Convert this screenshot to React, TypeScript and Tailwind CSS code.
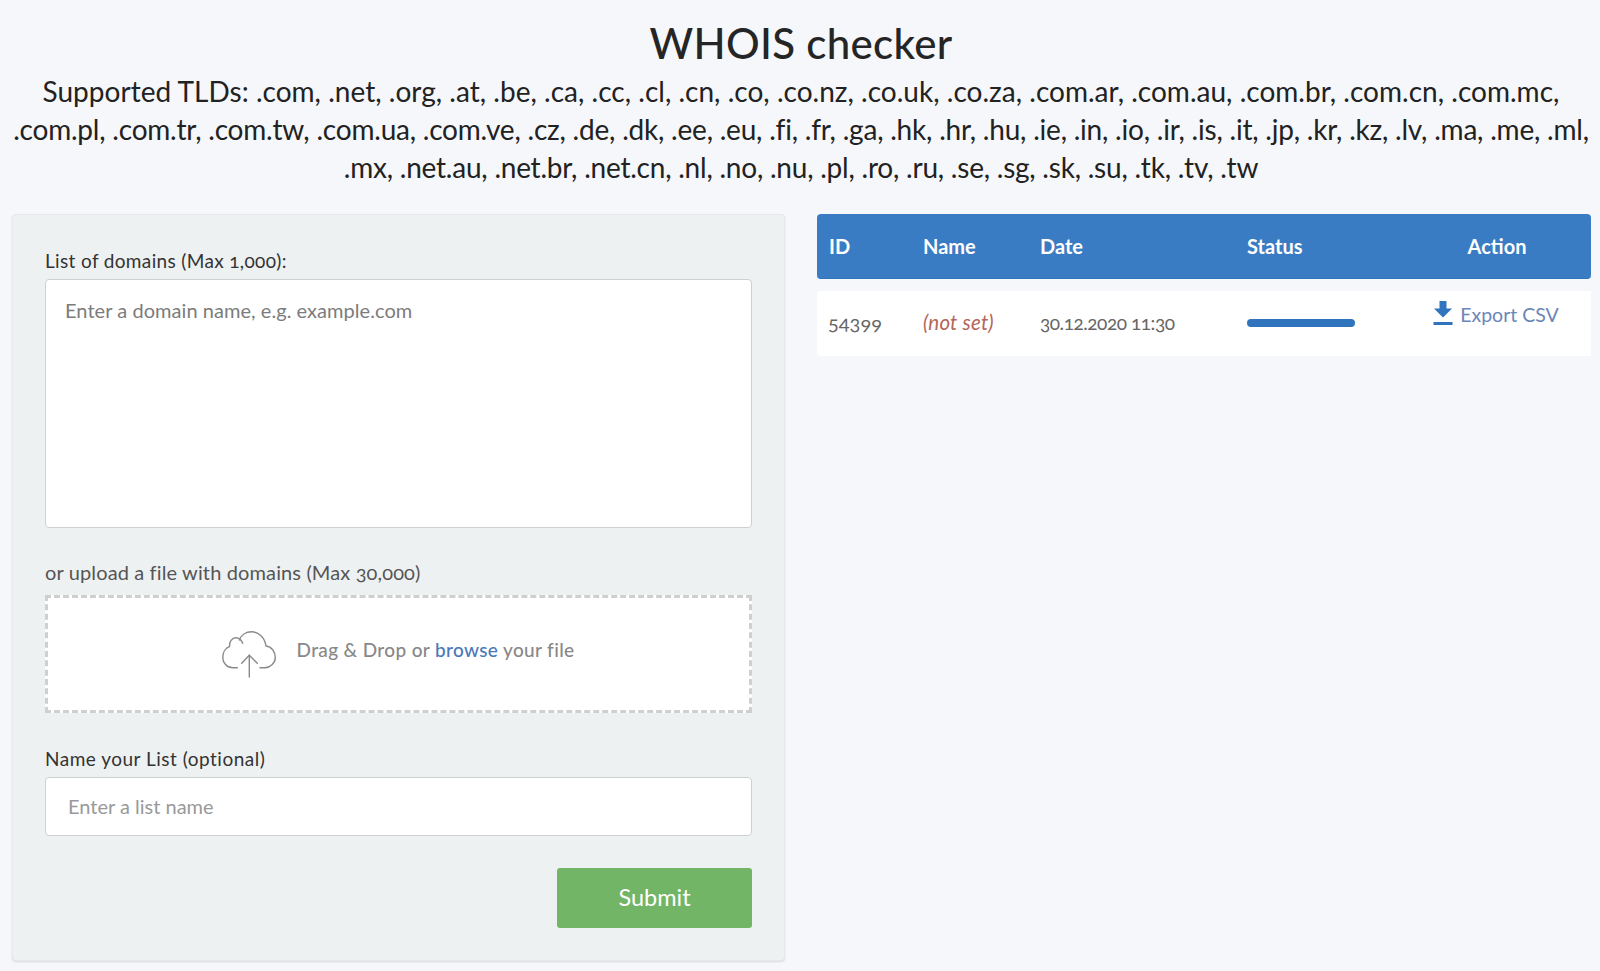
import React from "react";

const font = "font-['Lato','Noto_Sans',sans-serif]";
const cols = "grid grid-cols-[94px_117px_207px_168px_188px]";

function Cloud() {
  return (
    <svg width="54" height="47" viewBox="0 0 54 47" fill="none" stroke="#8a8a8a" strokeWidth="1.4" strokeLinecap="round" strokeLinejoin="round" className="shrink-0">
      <path d="M15.3 36.7H11C5 36.7 0.8 32 0.8 26.7C0.8 21.5 3.5 17 7.5 15.7C7 11 10 6.7 14 6.7C17 6.7 19.5 9 20.7 12.3" />
      <path d="M17.3 9C19 4 24 0.8 29.7 0.8C37 0.8 43 7 44 15C49.5 15.5 53.3 20.5 53.3 26.7C53.3 32 48 36.7 43 36.7H38" />
      <path d="M27.3 46V24.3" />
      <path d="M19.7 32.3L27.3 24.3L35.3 32.3" />
    </svg>
  );
}

function Download() {
  return (
    <svg width="20" height="24" viewBox="0 0 20 24" fill="#2f74bd" className="shrink-0">
      <path d="M6.5 0H13.5V7.5H19L10 16.5L1 7.5H6.5Z" />
      <rect x="0.5" y="21" width="19" height="3" />
    </svg>
  );
}

export default function App() {
  return (
    <div className={`${font} min-h-[971px] bg-[#f5f7fa] text-[#222] oldstyle-nums`}>
      <header className="text-center pl-[13px] pr-[11px] pt-[15px]">
        <h1 className="text-[42px] tracking-[0.3px] leading-[56px] font-medium text-[#252525]">WHOIS checker</h1>
        <p className="text-[28px] leading-[38px] mt-[1px] text-[#222] whitespace-nowrap">
          <span className="block tracking-[0.02px]">Supported TLDs: .com, .net, .org, .at, .be, .ca, .cc, .cl, .cn, .co, .co.nz, .co.uk, .co.za, .com.ar, .com.au, .com.br, .com.cn, .com.mc,</span>
          <span className="block tracking-[-0.215px]">.com.pl, .com.tr, .com.tw, .com.ua, .com.ve, .cz, .de, .dk, .ee, .eu, .fi, .fr, .ga, .hk, .hr, .hu, .ie, .in, .io, .ir, .is, .it, .jp, .kr, .kz, .lv, .ma, .me, .ml,</span>
          <span className="block tracking-[-0.225px]">.mx, .net.au, .net.br, .net.cn, .nl, .no, .nu, .pl, .ro, .ru, .se, .sg, .sk, .su, .tk, .tv, .tw</span>
        </p>
      </header>

      <main className="flex items-start pl-3 pr-[9px] mt-[28px] gap-8">
        <form className="w-[773px] h-[747px] shrink-0 rounded bg-[#eef1f2] border border-[#e6e9eb] shadow-[0_1px_2px_rgba(0,0,0,0.12)] px-8 pt-[32px]">
          <label className="block text-[19px] tracking-[0.35px] leading-[27px] text-[#333] mb-[5px]">List of domains (Max 1,000):</label>
          <div className="h-[249px] bg-white border border-[#ccd0d3] rounded pl-[19px] pr-5 pt-[16px] text-[20px] tracking-[0.05px] leading-[28px] text-[#7c7c7c]">
            Enter a domain name, e.g. example.com
          </div>

          <label className="block text-[20px] tracking-[0.13px] leading-[27px] text-[#555] mt-[31px] mb-[9px]">or upload a file with domains (Max 30,000)</label>
          <div className="h-[118px] bg-white border-[3px] border-dashed border-[#cfcfcf] flex items-center justify-center gap-[21px] pr-[1px] text-[19px] tracking-[0.36px] font-medium text-[#888]">
            <Cloud />
            <span className="pb-[8px]">Drag &amp; Drop or <span className="text-[#4a78b8]">browse</span> your file</span>
          </div>

          <label className="block text-[19px] tracking-[0.5px] leading-[27px] text-[#333] mt-[32px] mb-[5px]">Name your List (optional)</label>
          <div className="h-[59px] bg-white border border-[#ccd0d3] rounded px-[22px] pb-[1px] flex items-center text-[20px] text-[#999]">
            Enter a list name
          </div>

          <div className="flex justify-end mt-[32px]">
            <button type="button" className="w-[195px] h-[60px] rounded-[3px] bg-[#72b566] text-white text-[23.5px]">Submit</button>
          </div>
        </form>

        <section className="flex-1 min-w-0">
          <div className={`${cols} h-[65px] items-center rounded bg-[#397cc3] border-b border-[#2f74bd] text-white text-[20px] font-bold`}>
            <div className="pl-3">ID</div>
            <div className="pl-3">Name</div>
            <div className="pl-3">Date</div>
            <div className="pl-3">Status</div>
            <div className="text-center">Action</div>
          </div>
          <div className={`${cols} h-[65px] items-center mt-3 rounded-l bg-white text-[19px] text-[#666]`}>
            <div className="pl-[11px] pb-[4px] text-[20px]">54399</div>
            <div className="pl-3 pb-[2px] text-[20.5px] tracking-[0.2px] italic text-[#b5655a]">(not set)</div>
            <div className="pl-3 tracking-[-0.45px]">30.12.2020 11:30</div>
            <div className="pl-3 pb-[2px]">
              <div className="h-2 w-[108px] rounded bg-[#2f74bd]" />
            </div>
            <div className="flex justify-center items-center gap-[7px] pb-[21px] pr-[2px] text-[19.5px] text-[#6b86b8]">
              <Download />
              <span className="pt-[4px]">Export CSV</span>
            </div>
          </div>
        </section>
      </main>
    </div>
  );
}
